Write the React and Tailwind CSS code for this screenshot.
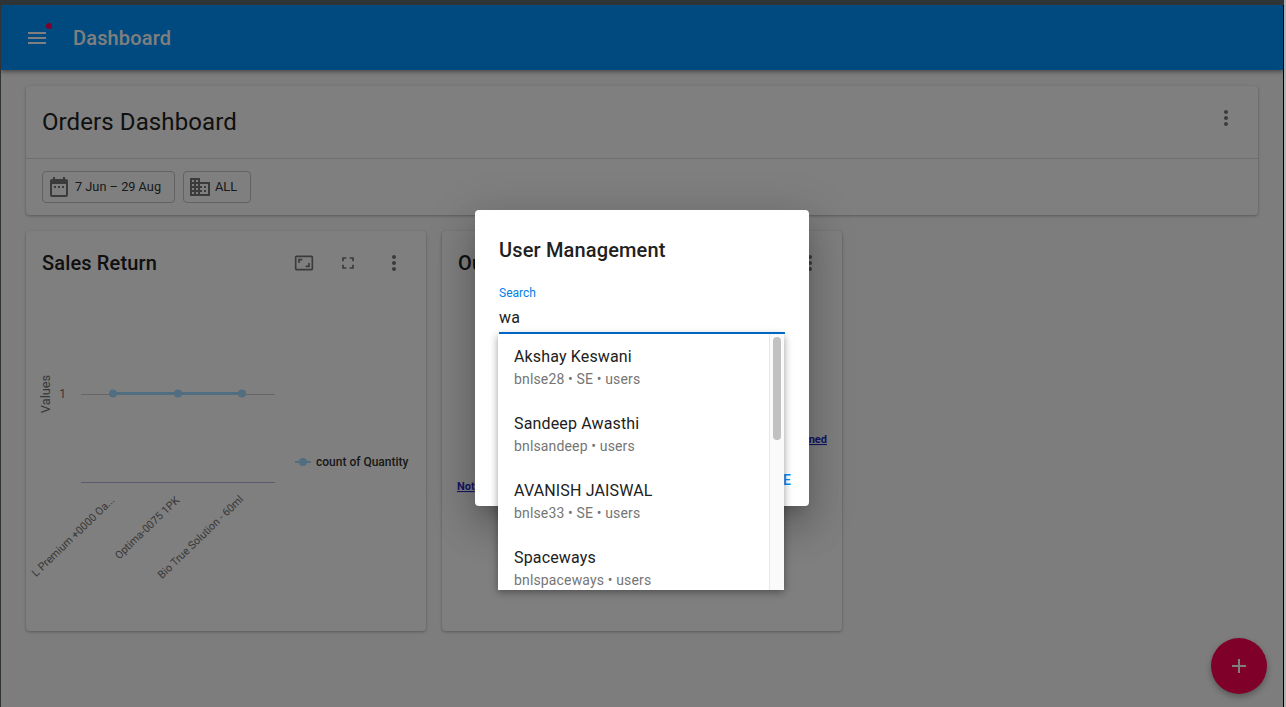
const ICONS = {
  menu: "M3 18h18v-2H3v2zm0-5h18v-2H3v2zm0-7v2h18V6H3z",
  dateRange:
    "M9 11H7v2h2v-2zm4 0h-2v2h2v-2zm4 0h-2v2h2v-2zm2-7h-1V2h-2v2H8V2H6v2H5c-1.11 0-1.99.9-1.99 2L3 20c0 1.1.89 2 2 2h14c1.1 0 2-.9 2-2V6c0-1.1-.9-2-2-2zm0 16H5V9h14v11z",
  domain:
    "M12 7V3H2v18h20V7H12zM6 19H4v-2h2v2zm0-4H4v-2h2v2zm0-4H4V9h2v2zm0-4H4V5h2v2zm4 12H8v-2h2v2zm0-4H8v-2h2v2zm0-4H8V9h2v2zm0-4H8V5h2v2zm10 12h-8v-2h2v-2h-2v-2h2v-2h-2V9h8v10zm-2-8h-2v2h2v-2zm0 4h-2v2h2v-2z",
  aspect:
    "M19 12h-2v3h-3v2h5v-5zM7 9h3V7H5v5h2V9zm14-6H3c-1.1 0-2 .9-2 2v14c0 1.1.9 2 2 2h18c1.1 0 2-.9 2-2V5c0-1.1-.9-2-2-2zm0 16.01H3V4.99h18v14.02z",
  fullscreen: "M7 14H5v5h5v-2H7v-3zm-2-4h2V7h3V5H5v5zm12 7h-3v2h5v-5h-2v3zM14 5v2h3v3h2V5h-5z",
  more: "M12 8c1.1 0 2-.9 2-2s-.9-2-2-2-2 .9-2 2 .9 2 2 2zm0 2c-1.1 0-2 .9-2 2s.9 2 2 2 2-.9 2-2-.9-2-2-2zm0 6c-1.1 0-2 .9-2 2s.9 2 2 2 2-.9 2-2-.9-2-2-2z",
  plus: "M19 13h-6v6h-2v-6H5v-2h6V5h2v6h6v2z",
};

const USERS = [
  { name: "Akshay Keswani", info: "bnlse28 • SE • users" },
  { name: "Sandeep Awasthi", info: "bnlsandeep • users" },
  { name: "AVANISH JAISWAL", info: "bnlse33 • SE • users" },
  { name: "Spaceways", info: "bnlspaceways • users" },
];

function Icon({ name, className }) {
  return (
    <svg viewBox="0 0 24 24" fill="currentColor" className={className}>
      <path d={ICONS[name]} />
    </svg>
  );
}

function Chip({ icon, label, className }) {
  return (
    <div className={`flex h-[32px] items-center rounded-[4px] border border-[#c4c4c4] pl-[4px] text-[12.75px] text-[#333] ${className}`}>
      <Icon name={icon} className="size-6 shrink-0 text-[#777]" />
      <span>{label}</span>
    </div>
  );
}

function SalesChart() {
  return (
    <svg viewBox="0 0 400 336" className="h-[336px] w-[400px]">
      <line x1="55" y1="99.5" x2="249" y2="99.5" stroke="#ccc" />
      <line x1="55" y1="187.5" x2="249" y2="187.5" stroke="#b4b8e0" />
      <polyline points="87,98.5 152,98.5 216,98.5" fill="none" stroke="#a0dcff" strokeWidth="3" />
      {[87, 152, 216].map((x) => (
        <circle key={x} cx={x} cy="98.5" r="4" fill="#a0dcff" />
      ))}
      <text x="40" y="103" textAnchor="end" fontSize="12" fill="#707070">1</text>
      <text transform="translate(24 99) rotate(-90)" textAnchor="middle" fontSize="12.8" fill="#707070">Values</text>
      <text transform="translate(89 206) rotate(-44)" textAnchor="end" fontSize="10.8" fill="#707070">L Premium +0000 Oa...</text>
      <text transform="translate(154 206) rotate(-44)" textAnchor="end" fontSize="10.8" fill="#707070">Optima-0075 1PK</text>
      <text transform="translate(218 205) rotate(-44)" textAnchor="end" fontSize="10.8" fill="#707070">Bio True Solution - 60ml</text>
      <line x1="269" y1="167" x2="285" y2="167" stroke="#a0dcff" strokeWidth="2" />
      <circle cx="277" cy="167" r="4" fill="#a0dcff" />
      <text x="290" y="171" fontSize="12" fontWeight="500" fill="#333">count of Quantity</text>
    </svg>
  );
}

// only the ends of these labels show past the modal
function SecondChart() {
  return (
    <svg viewBox="0 0 400 336" className="h-[336px] w-[400px]">
      <text x="15" y="195" fontSize="11" fontWeight="700" fill="#2a2ad0" textDecoration="underline">Not</text>
      <text x="385" y="148" textAnchor="end" fontSize="11" fontWeight="700" fill="#2a2ad0" textDecoration="underline">ned</text>
    </svg>
  );
}

function ChartCard({ title, children }) {
  return (
    <div className="h-[400px] w-[400px] overflow-hidden rounded-[4px] bg-white shadow-[0_1px_3px_rgba(0,0,0,0.3)]">
      <div className="flex h-[64px] items-center justify-between pl-4 pr-[10px]">
        <h2 className="text-[20px] font-medium tracking-[0.15px] text-[#212121]">{title}</h2>
        <div className="flex items-center text-[#777]">
          <span className="flex w-[44px] justify-center"><Icon name="aspect" className="size-5" /></span>
          <span className="flex w-[44px] justify-center"><Icon name="fullscreen" className="size-5" /></span>
          <span className="ml-[2px] flex w-[44px] justify-center"><Icon name="more" className="size-6" /></span>
        </div>
      </div>
      {children}
    </div>
  );
}

function UserModal() {
  return (
    <div className="absolute left-[474px] top-[205px] flex h-[296px] w-[334px] flex-col justify-between rounded-[4px] bg-white px-6 pt-6 pb-[16px] shadow-[0_11px_15px_-7px_rgba(0,0,0,0.2),0_24px_38px_3px_rgba(0,0,0,0.14),0_9px_46px_8px_rgba(0,0,0,0.12)]">
      <div>
        <h2 className="text-[20px] font-medium leading-[32px] tracking-[0.15px] text-[#212121]">User Management</h2>
        <div className="relative mt-[20px]">
          <label className="block text-[12px] leading-[14px] text-[#0080e8]">Search</label>
          <div className="mt-[8px] h-[26px] border-b-2 border-[#0070d8] text-[16px] leading-[19px] tracking-[0.15px] text-[#212121]">wa</div>
          <div className="absolute left-[-1px] top-full z-10 flex h-[256px] w-[286px] overflow-hidden bg-white shadow-[0_2px_8px_rgba(0,0,0,0.4)]">
            <ul className="flex-1">
              {USERS.map((user) => (
                <li key={user.name} className="h-[67px] pl-4 pt-[13px]">
                  <div className="text-[16px] leading-[20px] tracking-[0.15px] text-[#212121]">{user.name}</div>
                  <div className="mt-[2px] text-[14px] leading-[20px] tracking-[0.15px] text-[#757575]">{user.info}</div>
                </li>
              ))}
            </ul>
            <div className="w-[15px] border-l border-[#e8e8e8] bg-[#fafafa] pl-[3px] pt-[3px]">
              <div className="h-[103px] w-[8px] rounded-full bg-[#c1c1c1]" />
            </div>
          </div>
        </div>
      </div>
      <div className="flex justify-end">
        <span className="mr-[-6px] text-[14px] font-medium leading-[20px] text-[#0090f8]">CLOSE</span>
      </div>
    </div>
  );
}

export default function App() {
  return (
    <div className="flex h-[707px] w-[1286px] overflow-hidden font-['Roboto',sans-serif]">
      <div className="w-[1284px] shrink-0 bg-[#2f3436] pl-px pt-[5px]">
        <div className="relative flex h-[702px] flex-col overflow-hidden border-r border-black bg-[#fafafa]">
          <header className="flex h-[65px] shrink-0 items-center bg-[#0095ff] shadow-[0_2px_4px_rgba(0,0,0,0.4)]">
            <div className="relative ml-[24px] size-6 text-white">
              <Icon name="menu" className="size-6" />
              <span className="absolute right-[-3px] top-[-3px] size-[6px] rounded-full bg-[#ff0050]" />
            </div>
            <h1 className="ml-[24px] text-[20px] font-medium tracking-[0.15px] text-white">Dashboard</h1>
          </header>

          <main className="flex flex-col gap-4 pl-[25px] pr-[25px] pt-[16px]">
            <section className="h-[129px] rounded-[4px] bg-white shadow-[0_1px_3px_rgba(0,0,0,0.3)]">
              <div className="flex h-[73px] items-center justify-between border-b border-[#dcdcdc] pl-4 pr-[20px]">
                <h2 className="text-[24px] tracking-[0.1px] text-[#212121]">Orders Dashboard</h2>
                <Icon name="more" className="mb-[8px] size-6 text-[#777]" />
              </div>
              <div className="flex gap-2 pl-4 pt-[12px]">
                <Chip icon="dateRange" label="7 Jun – 29 Aug" className="w-[133px] gap-[4px]" />
                <Chip icon="domain" label="ALL" className="w-[68px] gap-[3px]" />
              </div>
            </section>

            <div className="flex gap-4">
              <ChartCard title="Sales Return"><SalesChart /></ChartCard>
              <ChartCard title="Ou"><SecondChart /></ChartCard>
            </div>
          </main>

          <button className="absolute left-[1210px] top-[633px] flex size-14 items-center justify-center rounded-full bg-[#ff0050] text-white shadow-[0_3px_6px_rgba(0,0,0,0.3)]">
            <Icon name="plus" className="size-6" />
          </button>

          <div className="absolute inset-0 bg-black/50" />
          <UserModal />
        </div>
      </div>
      <div className="flex-1 bg-[#b4b4b4]" />
    </div>
  );
}
